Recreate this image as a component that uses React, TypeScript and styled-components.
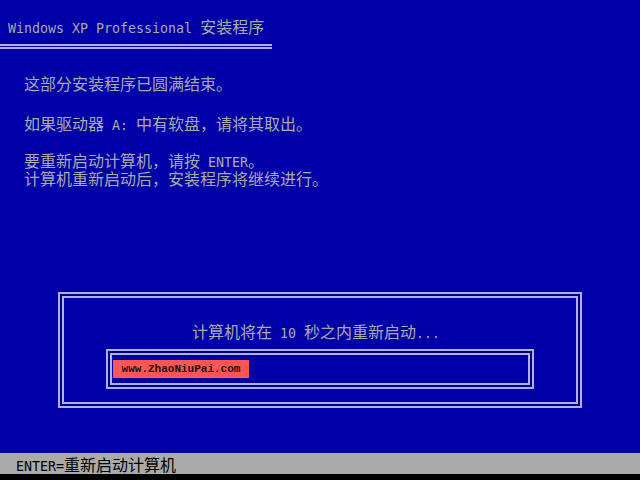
import React from "react";
import styled, { createGlobalStyle } from "styled-components";

const GlobalStyle = createGlobalStyle`
  html, body {
    margin: 0;
    padding: 0;
    background: #000;
  }
`;

const TEXT = "#aaaaaa";
const LINE = "#b0b0e4";
const BLUE = "#0000a8";

const Screen = styled.div`
  width: 640px;
  height: 480px;
  background: ${BLUE};
  color: ${TEXT};
  font-family: "Noto Sans CJK SC", "DejaVu Sans Mono", monospace;
  font-size: 16px;
  line-height: 16px;
  display: flex;
  flex-direction: column;
  overflow: hidden;
`;

const Mono = styled.span`
  font-family: "DejaVu Sans Mono", "Liberation Mono", monospace;
  font-size: 13.3px;
  line-height: 1;
  white-space: pre;
`;

const Header = styled.header`
  width: 272px;
  margin-top: 18px;
`;

const Title = styled.div`
  padding-left: 8px;
  height: 16px;
`;

const DoubleRule = styled.div`
  margin-top: 10px;
  height: 1px;
  border-top: 2px solid ${LINE};
  border-bottom: 2px solid ${LINE};
`;

const Body = styled.main`
  flex: 1;
  padding-left: 24px;
  padding-top: 26px;
`;

const Paragraph = styled.p<{ $gap?: number }>`
  margin: ${(p) => p.$gap ?? 0}px 0 0;
  white-space: pre;
`;

const Frame = styled.div`
  border: 2px solid ${LINE};
  padding: 2px;
  background: #00007c;
  display: flex;
`;

const FrameInner = styled.div`
  flex: 1;
  border: 2px solid ${LINE};
  background: ${BLUE};
  display: flex;
  flex-direction: column;
  align-items: center;
`;

const Dialog = styled(Frame)`
  margin: 0 58px 45px;
  height: 116px;
  box-sizing: border-box;
`;

const DialogBody = styled(FrameInner)`
  padding-top: 25px;
`;

const Countdown = styled.div`
  height: 16px;
  margin-right: 8px;
`;

const Progress = styled(Frame)`
  margin-top: 10px;
  width: 428px;
  height: 40px;
  box-sizing: border-box;
`;

const ProgressTrack = styled(FrameInner)`
  flex-direction: row;
  align-items: center;
  padding-left: 1px;
`;

const ProgressFill = styled.div`
  width: 136px;
  height: 18px;
  background: #ff5555;
  color: #1a1010;
  font-family: "Liberation Mono", monospace;
  font-weight: bold;
  font-size: 11px;
  line-height: 18px;
  text-align: center;
`;

const StatusBar = styled.footer`
  background: #aaaaaa;
  color: #000;
  box-sizing: border-box;
  padding: 3px 0 0 16px;
  border-bottom: 6px solid #000;
  height: 27px;
`;

export default function App() {
  return (
    <>
      <GlobalStyle />
      <Screen>
        <Header>
          <Title>
            <Mono>Windows XP Professional </Mono>安装程序
          </Title>
          <DoubleRule />
        </Header>
        <Body>
          <Paragraph>这部分安装程序已圆满结束。</Paragraph>
          <Paragraph $gap={24}>
            如果驱动器<Mono>{" A: "}</Mono>中有软盘，请将其取出。
          </Paragraph>
          <Paragraph $gap={20}>
            要重新启动计算机，请按<Mono>{" ENTER"}</Mono>。
          </Paragraph>
          <Paragraph>计算机重新启动后，安装程序将继续进行。</Paragraph>
        </Body>
        <Dialog>
          <DialogBody>
            <Countdown>
              计算机将在<Mono>{" 10 "}</Mono>秒之内重新启动<Mono>...</Mono>
            </Countdown>
            <Progress>
              <ProgressTrack>
                <ProgressFill>www.ZhaoNiuPai.com</ProgressFill>
              </ProgressTrack>
            </Progress>
          </DialogBody>
        </Dialog>
        <StatusBar>
          <Mono>ENTER=</Mono>重新启动计算机
        </StatusBar>
      </Screen>
    </>
  );
}
